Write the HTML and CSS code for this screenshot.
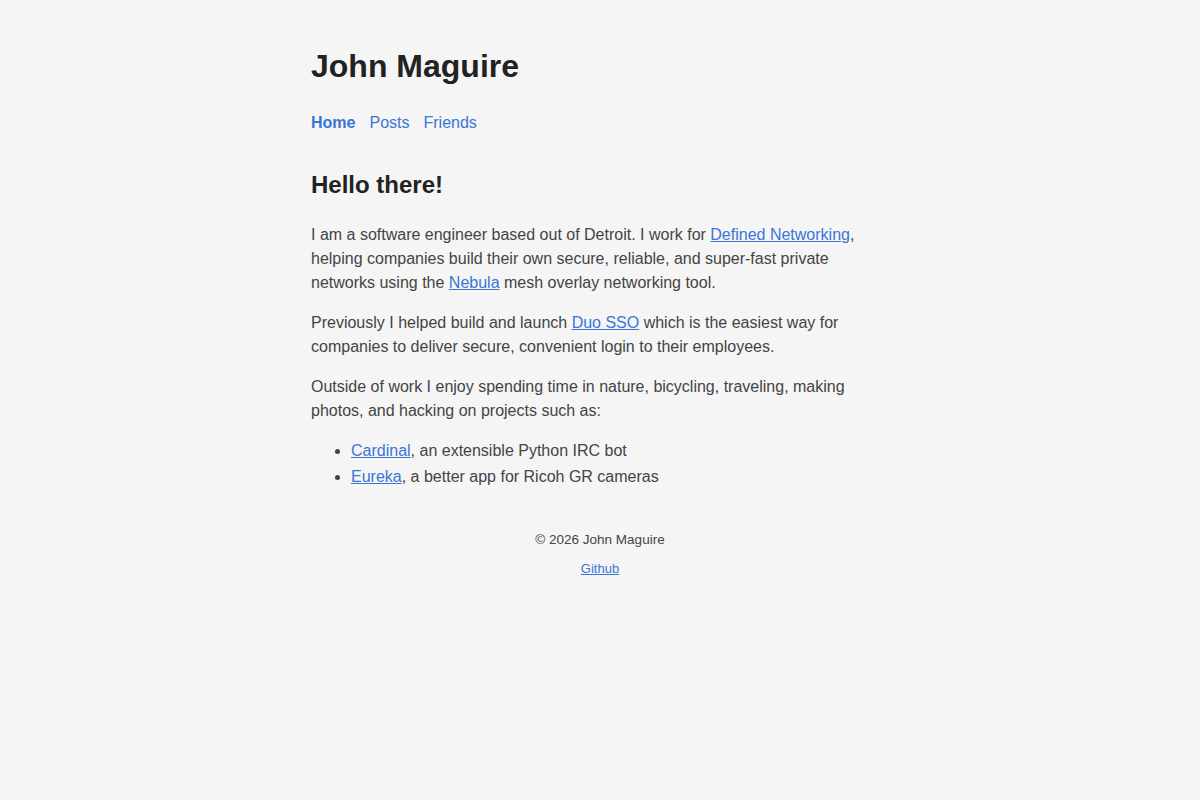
FILE: index.html
```html
<!DOCTYPE html>
<html lang="en">
<head>
<meta charset="utf-8">
<title>John Maguire</title>
<link rel="stylesheet" href="styles.css">
</head>
<body>
<div class="page">
  <header class="site-header">
    <h1 class="site-title">John Maguire</h1>
    <nav class="nav">
      <a class="nav-link active" href="#">Home</a>
      <a class="nav-link" href="#">Posts</a>
      <a class="nav-link" href="#">Friends</a>
    </nav>
  </header>
  <main class="content">
    <h2 class="heading">Hello there!</h2>
    <p>I am a software engineer based out of Detroit. I work for <a href="#">Defined Networking</a>, helping companies build their own secure, reliable, and super-fast private networks using the <a href="#">Nebula</a> mesh overlay networking tool.</p>
    <p>Previously I helped build and launch <a href="#">Duo SSO</a> which is the easiest way for companies to deliver secure, convenient login to their employees.</p>
    <p>Outside of work I enjoy spending time in nature, bicycling, traveling, making photos, and hacking on projects such as:</p>
    <ul class="projects">
      <li><a href="#">Cardinal</a>, an extensible Python IRC bot</li>
      <li><a href="#">Eureka</a>, a better app for Ricoh GR cameras</li>
    </ul>
  </main>
  <footer class="footer">
    <p class="copy">© 2026 John Maguire</p>
    <p class="footer-links"><a href="#">Github</a></p>
  </footer>
</div>
</body>
</html>
```

FILE: styles.css
```css
html, body {
  margin: 0;
  padding: 0;
  background: #f5f5f5;
}
body {
  font-family: "Liberation Sans", Arial, sans-serif;
  font-size: 16px;
  line-height: 24px;
  color: #444444;
}
.page {
  width: 578px;
  margin: 0 auto;
  padding-top: 48px;
}
a {
  color: #3a76d8;
}
.site-title {
  margin: 0;
  font-size: 32px;
  line-height: 37px;
  font-weight: bold;
  color: #222222;
}
.nav {
  margin-top: 26px;
  display: flex;
  gap: 14px;
}
.nav-link {
  text-decoration: none;
}
.nav-link.active {
  font-weight: bold;
}
.content {
  margin-top: 36px;
}
.heading {
  margin: 0 0 24px;
  font-size: 24px;
  line-height: 28px;
  font-weight: bold;
  color: #222222;
}
.content p {
  margin: 0 0 16px;
}
.projects {
  margin: 0;
  padding-left: 40px;
}
.projects li {
  line-height: 24px;
  margin-bottom: 2px;
}
.footer {
  margin-top: 43px;
  text-align: center;
  font-size: 13px;
  line-height: 16px;
}
.footer p {
  margin: 0;
}
.copy {
  font-size: 13.5px;
}
.footer-links {
  margin-top: 13px !important;
}
```
